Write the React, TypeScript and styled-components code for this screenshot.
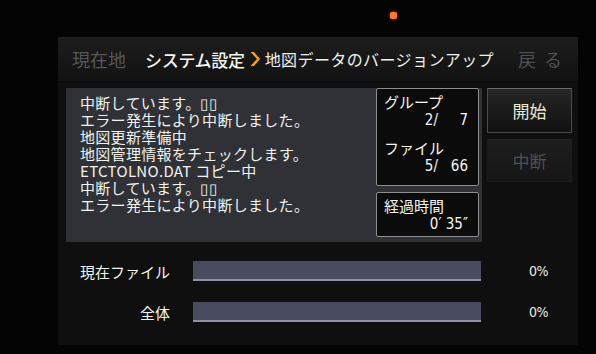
import React, { FC } from 'react'
import styled, { createGlobalStyle } from 'styled-components'

const GlobalStyle = createGlobalStyle`
  html, body {
    margin: 0;
    padding: 0;
    background: #040404;
  }
  body {
    font-family: "Noto Sans CJK JP", "Noto Sans", sans-serif;
  }
`

const logLines = [
  '中断しています。▯▯',
  'エラー発生により中断しました。',
  '地図更新準備中',
  '地図管理情報をチェックします。',
  'ETCTOLNO.DAT コピー中',
  '中断しています。▯▯',
  'エラー発生により中断しました。',
]

const progress = [
  { label: '現在ファイル', value: 0 },
  { label: '全体', value: 0 },
]

const App: FC = () => {
  return (
    <>
      <GlobalStyle />
      <Page>
        <Bezel>
          <Led />
        </Bezel>
        <Screen>
          <Header>
            <HomeLink>現在地</HomeLink>
            <Crumb>システム設定</Crumb>
            <Chevron viewBox="0 0 10 16">
              <path d="M0.5 1 L7 8 L0.5 15 L4 15 L10 8 L4 1 Z" fill="#f7a21b" />
            </Chevron>
            <SubCrumb>地図データのバージョンアップ</SubCrumb>
            <BackLink>
              <span>戻</span>
              <span>る</span>
            </BackLink>
          </Header>

          <Body>
            <LogPanel>
              <LogText>
                {logLines.map((line, i) => (
                  <LogLine key={`log${i}`}>{line}</LogLine>
                ))}
              </LogText>
              <InfoColumn>
                <InfoBox tall>
                  <InfoLabel>グループ</InfoLabel>
                  <InfoValue>
                    <Num>2/</Num>
                    <Num wide>7</Num>
                  </InfoValue>
                  <InfoLabel top={10}>ファイル</InfoLabel>
                  <InfoValue>
                    <Num>5/</Num>
                    <Num wide>66</Num>
                  </InfoValue>
                </InfoBox>
                <InfoBox>
                  <InfoLabel>経過時間</InfoLabel>
                  <InfoValue>
                    <Num>0′ 35″</Num>
                  </InfoValue>
                </InfoBox>
              </InfoColumn>
            </LogPanel>

            <ButtonColumn>
              <ActionButton>開始</ActionButton>
              <ActionButton disabled>中断</ActionButton>
            </ButtonColumn>
          </Body>

          <ProgressArea>
            {progress.map(p => (
              <ProgressRow key={p.label}>
                <ProgressLabel>{p.label}</ProgressLabel>
                <Bar>
                  <BarFill style={{ width: `${p.value}%` }} />
                </Bar>
                <Percent>{p.value}%</Percent>
              </ProgressRow>
            ))}
          </ProgressArea>
        </Screen>
      </Page>
    </>
  )
}

const Page = styled.div`
  width: 596px;
  height: 354px;
  overflow: hidden;
  background: #040404;
  display: flex;
  flex-direction: column;
`

const Bezel = styled.div`
  height: 37px;
  display: flex;
  align-items: flex-start;
  padding-left: 390px;
  box-sizing: border-box;
`

const Led = styled.div`
  margin-top: 12px;
  width: 7px;
  height: 7px;
  border-radius: 2px;
  background: #ff7b2e;
  box-shadow: 0 0 3px rgba(255, 120, 40, 0.7);
`

const Screen = styled.div`
  margin-left: 58px;
  width: 520px;
  height: 308px;
  background: #0f0f10;
  display: flex;
  flex-direction: column;
`

const Header = styled.div`
  height: 45px;
  display: flex;
  align-items: center;
  padding-left: 14px;
  background: linear-gradient(#1d1d1e, #161617 60%, #121213);
  border-bottom: 1px solid #0a0a0a;
  box-sizing: border-box;
`

const HomeLink = styled.div`
  font-size: 18px;
  color: #55575a;
  width: 73px;
`

const Crumb = styled.div`
  font-size: 17px;
  font-weight: 500;
  color: #f4f4f0;
  letter-spacing: -0.3px;
`

const Chevron = styled.svg`
  width: 10px;
  height: 16px;
  margin: 0 5px 0 5px;
`

const SubCrumb = styled.div`
  font-size: 16px;
  color: #f0f0ec;
  letter-spacing: 0.4px;
  flex: 1;
`

const BackLink = styled.div`
  display: flex;
  gap: 8px;
  font-size: 18px;
  color: #4e5053;
  margin-right: 16px;
`

const Body = styled.div`
  display: flex;
  gap: 5px;
  padding: 6px 0 0 8px;
`

const LogPanel = styled.div`
  width: 416px;
  height: 154px;
  background: #2f3136;
  display: flex;
`

const LogText = styled.div`
  flex: 1;
  padding: 6px 0 0 14px;
`

const LogLine = styled.div`
  font-size: 15px;
  line-height: 17px;
  height: 17px;
  color: #f2f2ee;
  white-space: nowrap;
  letter-spacing: 0.3px;
`

const InfoColumn = styled.div`
  width: 103px;
  margin-right: 3px;
  display: flex;
  flex-direction: column;
  gap: 6px;
`

const InfoBox = styled.div<{ tall?: boolean }>`
  height: ${p => (p.tall ? '98px' : '45px')};
  box-sizing: border-box;
  background: #0b0b0c;
  border: 1px solid #8d8e90;
  border-radius: 2px;
  padding: 4px 10px 0 7px;
`

const InfoLabel = styled.div<{ top?: number }>`
  font-size: 15px;
  line-height: 18px;
  color: #f4f4f0;
  margin-top: ${p => p.top || 0}px;
`

const InfoValue = styled.div`
  display: flex;
  justify-content: flex-end;
  font-size: 15px;
  line-height: 18px;
  color: #f4f4f0;
  font-family: "DejaVu Sans Condensed", "Liberation Sans Narrow", "Noto Sans CJK JP", sans-serif;
`

const Num = styled.span<{ wide?: boolean }>`
  display: inline-block;
  text-align: right;
  min-width: ${p => (p.wide ? '30px' : '0')};
`

const ButtonColumn = styled.div`
  width: 85px;
  display: flex;
  flex-direction: column;
  gap: 6px;
`

const ActionButton = styled.div<{ disabled?: boolean }>`
  height: ${p => (p.disabled ? '43px' : '45px')};
  box-sizing: border-box;
  display: flex;
  align-items: center;
  justify-content: center;
  font-size: 17px;
  color: ${p => (p.disabled ? '#4f5154' : '#ece8d4')};
  background: ${p =>
    p.disabled
      ? 'linear-gradient(#1e1e1f, #161617)'
      : 'linear-gradient(#262627, #1b1b1c 50%, #111112)'};
  border: 1px solid ${p => (p.disabled ? '#1c1c1d' : '#4a4b4d')};
  border-top-color: ${p => (p.disabled ? '#262627' : '#6a6b6d')};
`

const ProgressArea = styled.div`
  display: flex;
  flex-direction: column;
  gap: 21px;
  padding: 19px 0 0 8px;
`

const ProgressRow = styled.div`
  display: flex;
  align-items: center;
  height: 20px;
`

const ProgressLabel = styled.div`
  width: 104px;
  text-align: right;
  font-size: 15px;
  color: #f2f2ee;
  margin-right: 23px;
`

const Bar = styled.div`
  width: 288px;
  height: 20px;
  box-sizing: border-box;
  background: #484c5e;
  border-bottom: 2px solid #8f92a2;
`

const BarFill = styled.div`
  height: 100%;
  background: #3f8ad8;
`

const Percent = styled.div`
  margin-left: 48px;
  font-size: 14px;
  color: #ecebe4;
  font-family: "DejaVu Sans Condensed", "Liberation Sans Narrow", sans-serif;
  letter-spacing: -0.5px;
`

export default App
